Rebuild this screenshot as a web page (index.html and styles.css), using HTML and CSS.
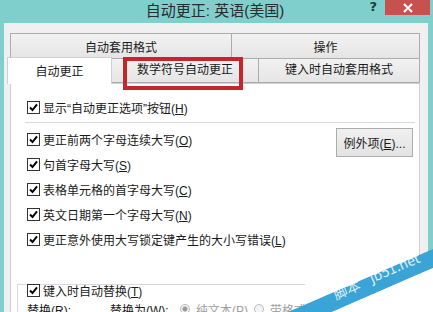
FILE: index.html
```html
<!DOCTYPE html>
<html lang="zh-CN">
<head>
    <meta charset="UTF-8">
    <title>自动更正: 英语(美国)</title>
    <link rel="stylesheet" href="styles.css">
</head>
<body>
<div class="window">
    <div class="titlebar">
        <span></span>
        <span class="title">自动更正: 英语(美国)</span>
        <div class="controls">
            <span class="help">?</span>
            <span class="close">
                <svg width="10" height="10" viewBox="0 0 10 10"><path d="M1 1 L9 9 M9 1 L1 9" stroke="#fff" stroke-width="2"/></svg>
            </span>
        </div>
    </div>

    <div class="dialog">
        <div class="tabrow back">
            <div class="tab t-format">自动套用格式</div>
            <div class="tab t-action">操作</div>
        </div>
        <div class="tabrow front">
            <div class="tab active">自动更正</div>
            <div class="tab t-math">数学符号自动更正<span class="mark"></span></div>
            <div class="tab t-typing">键入时自动套用格式</div>
        </div>

        <div class="panel">
            <label class="row">
                <svg class="cb" viewBox="0 0 13 13"><rect x=".5" y=".5" width="12" height="12" fill="#fff" stroke="#333"/><path d="M3 6.5 L5.5 9 L10 3.3" fill="none" stroke="#000" stroke-width="2"/></svg>
                <span>显示“自动更正选项”按钮(<u>H</u>)</span>
            </label>
            <div class="sep"></div>

            <div class="options">
                <div class="list">
                    <label class="row">
                        <svg class="cb" viewBox="0 0 13 13"><rect x=".5" y=".5" width="12" height="12" fill="#fff" stroke="#333"/><path d="M3 6.5 L5.5 9 L10 3.3" fill="none" stroke="#000" stroke-width="2"/></svg>
                        <span>更正前两个字母连续大写(<u>O</u>)</span>
                    </label>
                    <label class="row">
                        <svg class="cb" viewBox="0 0 13 13"><rect x=".5" y=".5" width="12" height="12" fill="#fff" stroke="#333"/><path d="M3 6.5 L5.5 9 L10 3.3" fill="none" stroke="#000" stroke-width="2"/></svg>
                        <span>句首字母大写(<u>S</u>)</span>
                    </label>
                    <label class="row">
                        <svg class="cb" viewBox="0 0 13 13"><rect x=".5" y=".5" width="12" height="12" fill="#fff" stroke="#333"/><path d="M3 6.5 L5.5 9 L10 3.3" fill="none" stroke="#000" stroke-width="2"/></svg>
                        <span>表格单元格的首字母大写(<u>C</u>)</span>
                    </label>
                    <label class="row">
                        <svg class="cb" viewBox="0 0 13 13"><rect x=".5" y=".5" width="12" height="12" fill="#fff" stroke="#333"/><path d="M3 6.5 L5.5 9 L10 3.3" fill="none" stroke="#000" stroke-width="2"/></svg>
                        <span>英文日期第一个字母大写(<u>N</u>)</span>
                    </label>
                    <label class="row">
                        <svg class="cb" viewBox="0 0 13 13"><rect x=".5" y=".5" width="12" height="12" fill="#fff" stroke="#333"/><path d="M3 6.5 L5.5 9 L10 3.3" fill="none" stroke="#000" stroke-width="2"/></svg>
                        <span>更正意外使用大写锁定键产生的大小写错误(<u>L</u>)</span>
                    </label>
                </div>
                <button class="btn">例外项(<u>E</u>)...</button>
            </div>

            <div class="group">
                <label class="row head">
                    <svg class="cb" viewBox="0 0 13 13"><rect x=".5" y=".5" width="12" height="12" fill="#fff" stroke="#333"/><path d="M3 6.5 L5.5 9 L10 3.3" fill="none" stroke="#000" stroke-width="2"/></svg>
                    <span>键入时自动替换(<u>T</u>)</span>
                </label>
                <div class="replace">
                    <span class="r-label">替换(<u>R</u>):</span>
                    <span class="w-label">替换为(<u>W</u>):</span>
                    <span class="radio on"></span>
                    <span class="dim">纯文本(<u>P</u>)</span>
                    <span class="radio"></span>
                    <span class="dim">带格式文本(<u>F</u>)</span>
                </div>
            </div>
        </div>
    </div>

    <svg class="watermark" width="433" height="312" viewBox="0 0 433 312">
        <polygon points="288,312 433,249 433,268 332,312" fill="#3ba4d6"/>
        <polygon points="332,312 433,268 433,312" fill="#ffffff"/>
        <text x="336" y="300" transform="rotate(-23.4 336 300)" class="wm-text">脚本</text>
        <text x="372" y="283" transform="rotate(-23.4 372 283)" class="wm-text">jb51.net</text>
    </svg>
</div>
</body>
</html>
```

FILE: styles.css
```css
body {
    margin: 0;
    font-family: "Liberation Sans", "Noto Sans CJK SC", sans-serif;
    font-size: 12px;
    color: #1a1a1a;
    overflow: hidden;
}
.window {
    position: relative;
    width: 433px;
    height: 312px;
    background: #7fcfcd;
    overflow: hidden;
}
.titlebar {
    height: 23px;
    display: grid;
    grid-template-columns: 70px 1fr 70px;
    align-items: start;
}
.title {
    font-size: 15px;
    line-height: 22px;
    color: #2b2b2b;
    text-align: center;
    white-space: nowrap;
    margin-right: 3px;
}
.controls {
    justify-self: end;
    display: flex;
    align-items: flex-start;
    padding-right: 3px;
}
.help {
    font-family: "DejaVu Sans", sans-serif;
    font-weight: bold;
    font-size: 13px;
    line-height: 14px;
    color: #22393c;
    margin-right: 8px;
}
.close {
    width: 45px;
    height: 15px;
    background: #c65250;
    display: flex;
    align-items: center;
    justify-content: center;
}
.dialog {
    margin: 0 5px 0 4px;
    height: 289px;
    background: #f0f0f0;
    padding: 10px 0 0 6px;
}
.tabrow {
    display: flex;
}
.tab {
    box-sizing: border-box;
    border: 1px solid #acacac;
    background: linear-gradient(#f2f2f2, #e5e5e5);
    text-align: center;
}
.back .tab {
    height: 26px;
    line-height: 22px;
    padding-top: 3px;
}
.t-format { width: 222px; }
.t-action { width: 188px; border-left: none; }
.front {
    height: 24px;
    align-items: flex-end;
    margin-left: -3px;
}
.front .tab {
    height: 24px;
    line-height: 22px;
    border-top: none;
}
.front .tab.active {
    position: relative;
    z-index: 2;
    width: 105px;
    height: 27px;
    margin-bottom: -1px;
    background: #fff;
    border: 1px solid #d0d0d0;
    border-bottom: none;
    line-height: 28px;
}
.t-math {
    position: relative;
    width: 147px;
    border-left: none;
}
.t-typing { width: 161px; border-left: none; }
.mark {
    position: absolute;
    left: 11px;
    right: 15px;
    top: -2px;
    bottom: -8px;
    border: 4px solid #c3272c;
    z-index: 3;
}
.panel {
    width: 410px;
    height: 240px;
    box-sizing: border-box;
    background: #fff;
    border: 1px solid #d0d0d0;
    padding: 11px 4px 0 14px;
}
.row {
    display: flex;
    align-items: center;
    gap: 3px;
    padding-left: 2px;
    height: 25px;
    white-space: nowrap;
}
.cb {
    width: 13px;
    height: 13px;
    flex: none;
}
.sep {
    height: 1px;
    background: #d8d8d8;
    margin: 2px 0 4px;
}
.options {
    display: flex;
    align-items: flex-start;
}
.list {
    flex: 1;
}
.btn {
    width: 77px;
    height: 29px;
    margin: 1px 2px 0 0;
    font-family: inherit;
    font-size: 12px;
    color: #1a1a1a;
    background: linear-gradient(#f0f0f0, #e3e3e3);
    border: 1px solid #acacac;
    padding: 0;
}
.group {
    margin: 32px 0 0 -8px;
    width: 278px;
    border-top: 1px solid #d8d8d8;
    border-left: 1px solid #d8d8d8;
    padding-left: 9px;
}
.group .row {
    padding-left: 0;
}
.group .head {
    height: 14px;
    margin-top: -2px;
}
.replace {
    display: flex;
    align-items: center;
    margin-top: 5px;
    height: 14px;
    white-space: nowrap;
}
.replace > span {
    flex: none;
}
.r-label { width: 83px; }
.w-label { width: 70px; }
.radio {
    width: 10px;
    height: 10px;
    box-sizing: border-box;
    border: 1px solid #bcbcbc;
    border-radius: 50%;
    background: #f4f4f4;
    margin-right: 6px;
}
.radio.on {
    background: radial-gradient(circle, #9a9a9a 2px, #f4f4f4 3px);
}
.dim {
    color: #a0a0a0;
    margin-right: 6px;
}
.watermark {
    position: absolute;
    left: 0;
    top: 0;
    pointer-events: none;
}
.wm-text {
    fill: #ffffff;
    fill-opacity: 0.85;
    font-family: "Noto Sans CJK SC", "DejaVu Sans", sans-serif;
    font-size: 14px;
}
```
